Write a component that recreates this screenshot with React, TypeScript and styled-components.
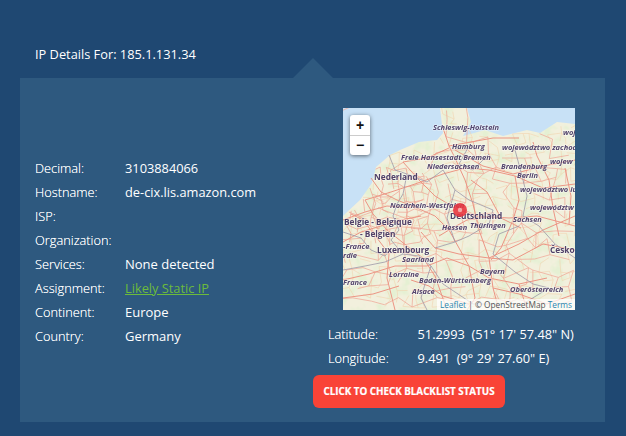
import React from "react";
import styled, { createGlobalStyle } from "styled-components";

const Global = createGlobalStyle`
  html, body { margin: 0; padding: 0; }
  body { background: #1f4872; font-family: "Open Sans", "Noto Sans", sans-serif; overflow: hidden; }
`;
const Page = styled.div`
  width: 626px; height: 436px; box-sizing: border-box; padding: 45px 21px 14px 20px; background: #1f4872;
`;
const Heading = styled.h2`
  margin: 0 0 15px 15px; height: 18px; font-size: 12.8px; line-height: 18px; font-weight: 400; color: #fff;
`;
const Panel = styled.section`
  position: relative; height: 344px; box-sizing: border-box; padding-left: 15px; background: #2e597f;
  display: grid; grid-template-columns: 278px 292px;
  &::before {
    content: ""; position: absolute; left: 273px; top: -20px; width: 0; height: 0;
    border-left: 20px solid transparent; border-right: 20px solid transparent; border-bottom: 20px solid #2e597f;
  }
`;
const Details = styled.dl`
  margin: 78px 0 0; display: grid; grid-template-columns: 90px 1fr; grid-auto-rows: 24px; align-content: start;
`;
const Label = styled.dt`
  font-size: 12.8px; line-height: 24px; color: #ffffff; font-weight: 300; text-shadow: 0 0 0.6px rgba(255,255,255,.8);
`;
const Value = styled.dd<{ $strong?: boolean }>`
  margin: 0; font-size: ${p => (p.$strong ? "13px" : "12.8px")}; line-height: 24px; color: #fff; font-weight: 500;
`;
const GreenLink = styled.a`
  color: #6cbb3c; text-decoration: underline; font-weight: 400;
`;
const Side = styled.div`
  padding-top: 30px; display: flex; flex-direction: column; align-items: flex-start;
`;
const MapBox = styled.div`
  position: relative; margin-left: 30px; width: 232px; height: 202px; overflow: hidden; background: #eff0dc;
`;
const MapSvg = styled.svg`
  display: block; filter: blur(0.45px);
`;
const Zoom = styled.div`
  position: absolute; left: 7px; top: 7px; width: 20px; background: #fff; border-radius: 3px;
  box-shadow: 0 1px 4px rgba(0,0,0,.55); display: flex; flex-direction: column;
`;
const ZoomBtn = styled.span`
  height: 19.5px; display: flex; align-items: center; justify-content: center; color: #111;
  font: 700 14px/20px "Liberation Sans", sans-serif;
  & + & { border-top: 1px solid #ccc; }
`;
const Attribution = styled.div`
  position: absolute; right: 0; bottom: 0; height: 11px; padding: 0 3px 0 3px; white-space: nowrap;
  background: rgba(255,255,255,.72); color: #555; font-size: 8.3px; line-height: 11px;
`;
const AttrLink = styled.span`
  color: #2a86b0;
`;
const Coords = styled.dl`
  margin: 12px 0 0 15px; display: grid; grid-template-columns: 89.5px 1fr; grid-auto-rows: 24px; width: 277px;
`;
const Action = styled.button`
  margin-top: 5px; width: 192px; height: 33px; padding: 0; border: 0; border-radius: 6px; background: #f94337; color: #fff;
  font-family: "Open Sans", sans-serif; font-size: 9.8px; font-weight: 700; white-space: nowrap; -webkit-text-stroke: 0.2px #fff;
`;
const State = styled.text`
  font-family: "Open Sans", sans-serif; font-style: italic; font-weight: 700; font-size: 7.5px; fill: #55466e;
  stroke: rgba(255,255,255,.45); stroke-width: 1.4px; paint-order: stroke;
`;
const Country = styled.text`
  font-family: "Open Sans", sans-serif; font-weight: 700; font-size: 8.3px; fill: #4f4068;
  stroke: rgba(255,255,255,.5); stroke-width: 1.4px; paint-order: stroke;
`;

const states: [string, number, number][] = [
  ["Schleswig-Holstein", 90, 22], ["Hamburg", 109, 41], ["województwo zachodnio", 159, 42],
  ["wojew", 207, 56], ["woje", 220, 27], ["Freie Hansestadt Bremen", 58, 52], ["Niedersachsen", 84, 61],
  ["Brandenburg", 158, 61], ["Berlin", 174, 70], ["województwo lu", 177, 84], ["Nordrhein-Westfalen", 47, 100],
  ["województw", 187, 102], ["Sachsen", 170, 114], ["Hessen", 99, 122], ["Thüringen", 127, 120],
  ["-France", 0, 141], ["rdie", 0, 150], ["Saarland", 59, 154], ["Bayern", 137, 166], ["Lorraine", 46, 169],
  ["Baden-Württemberg", 76, 175], ["France", 0, 177], ["Oberösterreich", 167, 184], ["Alsace", 69, 186],
];
const countries: [string, number, number][] = [
  ["Nederland", 31, 72], ["Deutschland", 107, 111], ["Belgie - Belgique", 1, 117],
  ["- Belgien", 17, 129], ["Luxembourg", 34, 145], ["Česko", 207, 145],
];
const roads = [
  "M100 20L106 38L112 50L122 72L130 96L136 122L146 150L150 180L156 202",
  "M106 38L128 34L150 30L176 30", "M112 42L140 58L170 66L200 58L232 52",
  "M60 54L84 50L106 40", "M60 54L76 72L92 88L112 100L132 108L166 110L194 108L232 118",
  "M22 92L48 84L72 76L100 66L122 60L146 62L172 68", "M172 68L176 92L170 112L158 140L148 152",
  "M172 68L200 80L232 76", "M22 92L30 106L44 122L64 138L80 150L92 168L104 202",
  "M28 70L38 84L54 92L74 100L92 108L106 122L116 140L126 158L146 170L176 176L204 170",
  "M0 112L22 104L44 98L68 100", "M0 134L18 124L38 118L58 112L78 108",
  "M8 106L20 112L34 130L46 146L44 170L52 202", "M78 124L92 140L116 146L146 150L176 136L200 122L232 108",
  "M96 128L106 122L124 112L150 108", "M84 158L104 150L126 158L132 190L124 202",
  "M0 172L26 166L52 158L84 158", "M68 172L86 178L100 188L126 196", "M176 176L184 202", "M146 150L170 152L200 136L232 142",
  "M190 34L194 48L206 72L210 100L216 128", "M128 72L144 84L158 110L178 120", "M0 190L30 186L56 178", "M222 60L228 88L226 116",
  "M150 180L176 186L204 196L232 186",
];
const borders = [
  "M46 47L52 62L64 66L60 86L54 96L50 108L56 122L48 132L60 146L76 148L88 158L82 176L78 190L84 202",
  "M0 124L18 130L28 142L42 148L48 140", "M0 162L22 158L42 154L60 146", "M88 158L100 176L130 196L180 196L206 180",
  "M172 42L178 64L184 88L180 108L196 118L212 136L232 150", "M176 118L156 126L150 146L172 164L190 176L206 180",
  "M64 66L84 74L100 62L112 82L104 110L112 134L92 140",
  "M112 134L126 128L146 116L150 102L126 92L112 82", "M126 38L116 56L130 62L146 46",
];
type Pt = [number, number];
const sea: Pt[] = [[0, 0], [97, 0], [100, 25], [94, 32], [76, 34], [57, 42], [47, 47], [33, 59], [29, 75], [17, 92], [3, 105], [0, 108]];
const baltic: Pt[] = [[124, 0], [128, 14], [120, 28], [142, 22], [160, 28], [184, 22], [197, 25], [214, 14], [232, 16], [232, 0]];
const toPath = (poly: Pt[]) => "M" + poly.map(p => p.join(" ")).join("L") + "Z";
const inside = (p: Pt, poly: Pt[]) => {
  let hit = false;
  for (let i = 0, j = poly.length - 1; i < poly.length; j = i++) {
    const [xi, yi] = poly[i], [xj, yj] = poly[j];
    if (yi > p[1] !== yj > p[1] && p[0] < ((xj - xi) * (p[1] - yi)) / (yj - yi) + xi) hit = !hit;
  }
  return hit;
};
let seed = 7;
const rnd = () => ((seed = (seed * 16807) % 2147483647) / 2147483647);
const mesh = (x0: number, y0: number, x1: number, y1: number, step: number, keep: number) => {
  const nodes: Pt[][] = [];
  for (let y = y0; y <= y1; y += step) {
    const row: Pt[] = [];
    for (let x = x0; x <= x1; x += step) row.push([x + (rnd() - 0.5) * step * 0.8, y + (rnd() - 0.5) * step * 0.8]);
    nodes.push(row);
  }
  let d = "";
  const wet = (p: Pt) => inside(p, sea) || inside(p, baltic);
  nodes.forEach((row, r) => row.forEach((n, c) => {
    [row[c + 1], nodes[r + 1]?.[c]].forEach(m => {
      if (m && rnd() < keep && !wet(n) && !wet(m)) d += `M${n[0].toFixed(1)} ${n[1].toFixed(1)}L${m[0].toFixed(1)} ${m[1].toFixed(1)}`;
    });
  }));
  return d;
};
const wideMesh = mesh(0, 0, 236, 206, 15, 0.62);
const denseMesh = mesh(6, 62, 92, 136, 8, 0.6);
const minorMesh = mesh(0, 0, 236, 206, 9, 0.4);

const GermanyMap = () => (
  <MapSvg width="232" height="202" viewBox="0 0 232 202">
    <defs>
      <filter id="mottle" x="0" y="0" width="100%" height="100%">
        <feTurbulence type="fractalNoise" baseFrequency="0.09" numOctaves="3" seed="4" />
        <feColorMatrix type="matrix" values="0 0 0 0 0.78  0 0 0 0 0.87  0 0 0 0 0.65  3.4 0 0 0 -1.55" />
      </filter>
    </defs>
    <rect width="232" height="202" fill="#f2f0dd" />
    <rect width="232" height="202" filter="url(#mottle)" />
    <path d={toPath(sea)} fill="#c8e1f6" />
    <path d={toPath(baltic)} fill="#c8e1f6" />
    <path d={minorMesh} fill="none" stroke="#f1d3ae" strokeWidth=".6" />
    <path d={wideMesh} fill="none" stroke="#efa898" strokeWidth=".75" />
    <path d={denseMesh} fill="none" stroke="#eea091" strokeWidth=".7" />
    {roads.map(d => <path key={d} d={d} fill="none" stroke="#ec9584" strokeWidth="1" />)}
    {borders.map(d => <path key={d} d={d} fill="none" stroke="#9d98a8" strokeWidth=".8" />)}
    {states.map(([t, x, y]) => <State key={t + x} x={x} y={y}>{t}</State>)}
    {countries.map(([t, x, y]) => <Country key={t} x={x} y={y}>{t}</Country>)}
    <circle cx="117" cy="102" r="7" fill="#e8323c" opacity=".88" />
    <circle cx="117" cy="102" r="2.2" fill="#f6a6a6" />
  </MapSvg>
);

export default function App() {
  return (
    <Page>
      <Global />
      <Heading>IP Details For: 185.1.131.34</Heading>
      <Panel>
        <Details>
          <Label>Decimal:</Label><Value>3103884066</Value>
          <Label>Hostname:</Label><Value>de-cix.lis.amazon.com</Value>
          <Label>ISP:</Label><Value />
          <Label>Organization:</Label><Value />
          <Label>Services:</Label><Value $strong>None detected</Value>
          <Label>Assignment:</Label><Value><GreenLink href="#">Likely Static IP</GreenLink></Value>
          <Label>Continent:</Label><Value $strong>Europe</Value>
          <Label>Country:</Label><Value $strong>Germany</Value>
        </Details>
        <Side>
          <MapBox>
            <GermanyMap />
            <Zoom><ZoomBtn>+</ZoomBtn><ZoomBtn>−</ZoomBtn></Zoom>
            <Attribution><AttrLink>Leaflet</AttrLink> | © OpenStreetMap <AttrLink>Terms</AttrLink></Attribution>
          </MapBox>
          <Coords>
            <Label>Latitude:</Label><Value>51.2993&nbsp; (51° 17' 57.48" N)</Value>
            <Label>Longitude:</Label><Value>9.491&nbsp; (9° 29' 27.60" E)</Value>
          </Coords>
          <Action>CLICK TO CHECK BLACKLIST STATUS</Action>
        </Side>
      </Panel>
    </Page>
  );
}
